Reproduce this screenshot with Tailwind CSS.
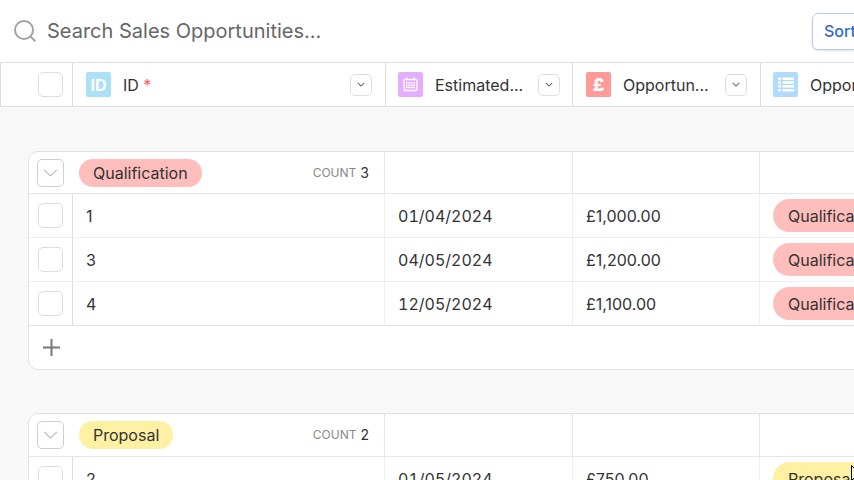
<!DOCTYPE html>
<html lang="en">

<head>
    <meta charset="UTF-8">
    <meta name="viewport" content="width=device-width, initial-scale=1.0">
    <title>Sales Opportunities</title>
    <script src="https://cdn.jsdelivr.net/npm/@tailwindcss/browser@4"></script>
</head>

<body class="min-h-screen overflow-hidden bg-[#f8f8f8] font-['Inter','Liberation_Sans',sans-serif] text-base font-normal text-[#333]">
    <svg class="hidden">
        <symbol id="chevron" viewBox="0 0 10 6"><path d="M1 1l4 4 4-4" fill="none" stroke="currentColor" stroke-width="1.3" /></symbol>
        <symbol id="chevron-wide" viewBox="0 0 16 9"><path d="M1 1l7 7 7-7" fill="none" stroke="currentColor" stroke-width="1" /></symbol>
    </svg>

    <!-- Search bar -->
    <header class="flex h-[62px] items-center bg-white pl-3">
        <label for="search" class="mr-2 shrink-0">
            <svg class="size-6" viewBox="0 0 24 24" fill="none" stroke="#a3a3a3" stroke-width="2">
                <circle cx="12" cy="11" r="9" />
                <path d="M18.300 17.300l5 5" />
            </svg>
        </label>
        <input id="search" type="text" placeholder="Search Sales Opportunities..." class="h-10 min-w-0 flex-1 pl-[3px] text-xl outline-none placeholder:text-[#666]">
        <button type="button" class="-mr-5 h-[37px] w-[62px] shrink-0 rounded-md border border-[#b9cbf3] bg-white pl-[11px] text-left font-medium text-[#3268cf] shadow-sm">Sort</button>
    </header>

    <main>
        <!-- Column headings -->
        <table class="w-[948px] min-w-full table-fixed border-separate border-spacing-0 bg-white">
            <colgroup>
                <col class="w-[73px]">
                <col class="w-[313px]">
                <col class="w-[187px]">
                <col class="w-[188px]">
                <col>
            </colgroup>
            <thead>
                <tr class="h-[45px] text-left *:border-y *:border-r *:border-[#dedede] *:p-0 *:font-normal">
                    <th class="border-l">
                        <input type="checkbox" aria-label="Select all" class="ml-[37px] block size-[25px] appearance-none rounded-[5px] border border-[#dedede] bg-white">
                    </th>
                    <th>
                        <div class="flex items-center px-[13px]">
                            <span class="flex size-[25px] shrink-0 items-center justify-center rounded-xs bg-[#abe0f6] text-base font-bold text-white">ID</span>
                            <span class="ml-3 flex-1">ID <span class="text-[#ff5a5a]">*</span></span>
                            <button type="button" aria-label="ID options" class="flex size-[22px] shrink-0 items-center justify-center rounded-[5px] border border-[#dedede] text-[#666]"><svg class="h-[5px] w-2"><use href="#chevron" /></svg></button>
                        </div>
                    </th>
                    <th>
                        <div class="flex items-center px-3">
                            <span class="flex size-[25px] shrink-0 items-center justify-center rounded-xs bg-[#e5adff]">
                                <svg class="size-[15px]" viewBox="0 0 15 15" fill="none" stroke="#fff">
                                    <rect x="1" y="2.5" width="13" height="11" rx="1" stroke-width="1.3" />
                                    <path d="M4 .5v2M11 .5v2" stroke-width="1.3" />
                                    <path d="M3 5.5h9M3 8h9M3 10.500h9M3.500 5v6.500M6.200 5v6.500M8.900 5v6.500M11.500 5v6.500" stroke-width=".8" />
                                </svg>
                            </span>
                            <span class="ml-3 flex-1">Estimated...</span>
                            <button type="button" aria-label="Estimated options" class="flex size-[22px] shrink-0 items-center justify-center rounded-[5px] border border-[#dedede] text-[#666]"><svg class="h-[5px] w-2"><use href="#chevron" /></svg></button>
                        </div>
                    </th>
                    <th>
                        <div class="flex items-center px-[13px]">
                            <span class="flex size-[25px] shrink-0 items-center justify-center rounded-xs bg-[#ff9b97] text-lg font-extrabold text-white">£</span>
                            <span class="ml-3 flex-1">Opportun...</span>
                            <button type="button" aria-label="Opportunity value options" class="flex size-[22px] shrink-0 items-center justify-center rounded-[5px] border border-[#dedede] text-[#666]"><svg class="h-[5px] w-2"><use href="#chevron" /></svg></button>
                        </div>
                    </th>
                    <th>
                        <div class="flex items-center px-3">
                            <span class="flex size-[25px] shrink-0 items-center justify-center rounded-xs bg-[#b0daff]">
                                <svg class="h-[15px] w-4" viewBox="0 0 16 15" fill="#fff">
                                    <path d="M0 0.500h3v2.500H0zM0 4.300h3v2.500H0zM0 8.100h3v2.500H0zM0 11.900h3v2.500H0zM4.500 .5H16V3H4.500zM4.500 4.300H16v2.500H4.500zM4.500 8.100H16v2.500H4.500zM4.500 11.900H16v2.500H4.500z" />
                                </svg>
                            </span>
                            <span class="ml-3 flex-1">Opportun...</span>
                        </div>
                    </th>
                </tr>
            </thead>
        </table>

        <div class="mt-11 ml-7 flex w-[920px] min-w-full flex-col gap-[43px]">
            <!-- Qualification -->
            <section class="overflow-hidden rounded-[10px] border border-[#e2e2e2] bg-white">
                <table class="w-full table-fixed border-separate border-spacing-0">
                    <colgroup>
                        <col class="w-11">
                        <col class="w-[312px]">
                        <col class="w-[188px]">
                        <col class="w-[187px]">
                        <col>
                    </colgroup>
                    <thead>
                        <tr class="h-[42px] *:border-r *:border-b *:border-[#e5e5e5] *:p-0">
                            <th colspan="2" class="font-normal">
                                <div class="flex items-center pr-[15px] pl-2">
                                    <button type="button" aria-label="Collapse Qualification" class="flex h-7 w-[27px] items-center justify-center rounded-[5px] border border-[#cfcfcf] text-[#888]"><svg class="h-2 w-[15px]"><use href="#chevron-wide" /></svg></button>
                                    <span class="ml-[15px] flex h-7 items-center rounded-full bg-[#ffbdbb] px-[14px]">Qualification</span>
                                    <span class="ml-auto flex items-center gap-1 text-sm"><span class="text-xs text-[#888]">COUNT</span> 3</span>
                                </div>
                            </th>
                            <td></td>
                            <td></td>
                            <td></td>
                        </tr>
                    </thead>
                    <tbody>
                        <tr class="h-11 *:border-r *:border-b *:border-[#efefef] *:p-0">
                            <td class="border-r-[#dedede]!"><input type="checkbox" aria-label="Select 1" class="ml-[9px] block size-[25px] appearance-none rounded-[5px] border border-[#dedede] bg-white"></td>
                            <td class="pl-[13px]!">1</td>
                            <td class="pl-[13px]! tabular-nums">01/04/2024</td>
                            <td class="pl-[13px]!">£1,000.00</td>
                            <td class="pl-[13px]!"><span class="flex h-[33px] w-max items-center rounded-full bg-[#ffbdbb] px-[15px]">Qualification</span></td>
                        </tr>
                        <tr class="h-11 *:border-r *:border-b *:border-[#efefef] *:p-0">
                            <td class="border-r-[#dedede]!"><input type="checkbox" aria-label="Select 3" class="ml-[9px] block size-[25px] appearance-none rounded-[5px] border border-[#dedede] bg-white"></td>
                            <td class="pl-[13px]!">3</td>
                            <td class="pl-[13px]! tabular-nums">04/05/2024</td>
                            <td class="pl-[13px]!">£1,200.00</td>
                            <td class="pl-[13px]!"><span class="flex h-[33px] w-max items-center rounded-full bg-[#ffbdbb] px-[15px]">Qualification</span></td>
                        </tr>
                        <tr class="h-11 *:border-r *:border-b *:border-[#efefef] *:border-b-[#e2e2e2] *:p-0">
                            <td class="border-r-[#dedede]!"><input type="checkbox" aria-label="Select 4" class="ml-[9px] block size-[25px] appearance-none rounded-[5px] border border-[#dedede] bg-white"></td>
                            <td class="pl-[13px]!">4</td>
                            <td class="pl-[13px]! tabular-nums">12/05/2024</td>
                            <td class="pl-[13px]!">£1,100.00</td>
                            <td class="pl-[13px]!"><span class="flex h-[33px] w-max items-center rounded-full bg-[#ffbdbb] px-[15px]">Qualification</span></td>
                        </tr>
                    </tbody>
                </table>
                <button type="button" aria-label="Add record" class="flex h-[43px] w-full items-center pl-[14px]">
                    <svg class="size-[17px]" viewBox="0 0 17 17" stroke="#777" stroke-width="2"><path d="M8.500 0v17M0 8.500h17" /></svg>
                </button>
            </section>

            <!-- Proposal -->
            <section class="overflow-hidden rounded-t-[10px] border border-[#e2e2e2] bg-white">
                <table class="w-full table-fixed border-separate border-spacing-0">
                    <colgroup>
                        <col class="w-11">
                        <col class="w-[312px]">
                        <col class="w-[188px]">
                        <col class="w-[187px]">
                        <col>
                    </colgroup>
                    <thead>
                        <tr class="h-[43px] *:border-r *:border-b *:border-[#e5e5e5] *:p-0">
                            <th colspan="2" class="font-normal">
                                <div class="flex items-center pr-[15px] pl-2">
                                    <button type="button" aria-label="Collapse Proposal" class="flex h-7 w-[27px] items-center justify-center rounded-[5px] border border-[#cfcfcf] text-[#888]"><svg class="h-2 w-[15px]"><use href="#chevron-wide" /></svg></button>
                                    <span class="ml-[15px] flex h-7 items-center rounded-full bg-[#fff0a3] px-[14px]">Proposal</span>
                                    <span class="ml-auto flex items-center gap-1 text-sm"><span class="text-xs text-[#888]">COUNT</span> 2</span>
                                </div>
                            </th>
                            <td></td>
                            <td></td>
                            <td></td>
                        </tr>
                    </thead>
                    <tbody>
                        <tr class="h-11 *:border-r *:border-b *:border-[#efefef] *:p-0">
                            <td class="border-r-[#dedede]!"><input type="checkbox" aria-label="Select 2" class="ml-[9px] block size-[25px] appearance-none rounded-[5px] border border-[#dedede] bg-white"></td>
                            <td class="pl-[13px]!">2</td>
                            <td class="pl-[13px]! tabular-nums">01/05/2024</td>
                            <td class="pl-[13px]!">£750.00</td>
                            <td class="pl-[13px]!"><span class="flex h-[33px] w-max items-center rounded-full bg-[#fff0a3] px-[15px]">Proposal</span></td>
                        </tr>
                    </tbody>
                </table>
            </section>
        </div>
    </main>

    <!-- Mouse pointer -->
    <svg class="pointer-events-none fixed right-[-9px] bottom-[-3px] h-[18px] w-3" viewBox="0 0 12 18">
        <path d="M.5 .5v15l3.500-3.300 2.300 5 2-1-2.200-4.700h5z" fill="#fff" stroke="#000" />
    </svg>
</body>

</html>
